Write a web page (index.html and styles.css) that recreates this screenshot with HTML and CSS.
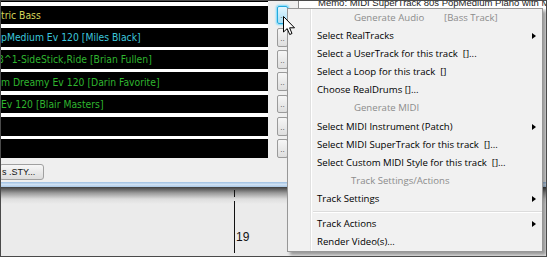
FILE: index.html
```html
<!DOCTYPE html>
<html lang="en">
<head>
    <meta charset="UTF-8">
    <title>Track Menu</title>
    <link rel="stylesheet" href="styles.css">
</head>
<body>
    <div class="frame">
        <div class="top">
            <div class="tracks">
                <div class="track stub"></div>
                <div class="track"><span class="name bass">tric Bass</span></div>
                <div class="track"><span class="name piano">pMedium Ev 120 [Miles Black]</span></div>
                <div class="track"><span class="name drums cut">3^1-SideStick,Ride [Brian Fullen]</span></div>
                <div class="track"><span class="name drums">m Dreamy Ev 120 [Darin Favorite]</span></div>
                <div class="track"><span class="name drums">Ev 120 [Blair Masters]</span></div>
                <div class="track"></div>
                <div class="track"></div>
            </div>
            <div class="pickers">
                <div class="pick stub"></div>
                <button class="pick active">..</button>
                <button class="pick">..</button>
                <button class="pick">..</button>
                <button class="pick">..</button>
                <button class="pick">..</button>
                <button class="pick">..</button>
                <button class="pick">..</button>
            </div>
            <div class="memo">
                <div class="memo-box">Memo: MIDI SuperTrack 80s PopMedium Piano with MIDI B</div>
            </div>
        </div>

        <div class="style-row">
            <button class="sty">s .STY...</button>
        </div>

        <div class="ruler">
            <div class="ruler-edge"></div>
            <div class="ruler-body">
                <div class="bar-mark"><span>19</span></div>
            </div>
        </div>

        <!-- popup menu for the track picker -->
        <div class="menu">
            <div class="item head"><span class="head-a">Generate Audio</span><span>[Bass Track]</span></div>
            <div class="item sub">Select RealTracks</div>
            <div class="item">Select a UserTrack for this track  []...</div>
            <div class="item">Select a Loop for this track  []</div>
            <div class="item">Choose RealDrums []...</div>
            <div class="item head">Generate MIDI</div>
            <div class="item sub">Select MIDI Instrument (Patch)</div>
            <div class="item">Select MIDI SuperTrack for this track  []...</div>
            <div class="item">Select Custom MIDI Style for this track  []...</div>
            <div class="item head head-wide">Track Settings/Actions</div>
            <div class="item sub">Track Settings</div>
            <div class="sep"></div>
            <div class="item sub">Track Actions</div>
            <div class="item">Render Video(s)...</div>
        </div>

        <svg class="cursor" width="13" height="20" viewBox="0 0 13 20">
            <path d="M0.5 0.5 L0.5 16 L4.2 12.6 L6.7 18.5 L9 17.5 L6.6 11.8 L11.5 11.8 Z" fill="#fff" stroke="#000" stroke-width="1" stroke-linejoin="round"/>
        </svg>
    </div>
</body>
</html>
```

FILE: styles.css
```css
* {
    box-sizing: border-box;
}
body {
    margin: 0;
    background-color: #ffffff;
}
.frame {
    position: relative;
    width: 547px;
    height: 257px;
    overflow: hidden;
    border: 1px solid #4a4a4a;
    background-color: #efefef;
    font-family: "Open Sans", sans-serif;
}
.top {
    display: flex;
}
.tracks {
    flex-shrink: 0;
    width: 267px;
    display: flex;
    flex-direction: column;
    gap: 3.5px;
    background-color: #ffffff;
}
.track {
    height: 18.8px;
    background-color: #000000;
    display: flex;
    align-items: center;
    overflow: hidden;
    white-space: nowrap;
}
.track.stub {
    height: 1px;
}
.name {
    font-family: "DejaVu Sans Condensed", "DejaVu Sans", sans-serif;
    font-size: 10.3px;
}
.name.cut {
    margin-left: -3px;
}
.bass {
    color: #d6d65a; /* yellow for the bass track */
}
.piano {
    color: #3cc6dc;
}
.drums {
    color: #2fb52f;
}
.pickers {
    flex-shrink: 0;
    width: 11px;
    margin-left: 9px;
    display: flex;
    flex-direction: column;
    gap: 3.5px;
}
.pick {
    height: 18.8px;
    padding: 0 0 3px 0;
    border: 1px solid #9a9a9a;
    border-radius: 2px;
    background: linear-gradient(#f6f6f6, #dedede);
    font-family: "Liberation Sans", sans-serif;
    font-size: 8px;
    line-height: 1;
    color: #444;
    display: flex;
    align-items: flex-end;
    justify-content: center;
}
.pick.stub {
    height: 1px;
    border: none;
    background: none;
    padding: 0;
}
.pick.active {
    border-color: #23a9dc;
    background: linear-gradient(#e2f6ff, #a9def6);
    box-shadow: 0 0 2px 1px #6fd8ff;
}
.memo {
    flex: 1;
    min-width: 0;
    height: 8px;
    padding-left: 10px;
}
.memo-box {
    height: 8px;
    overflow: hidden;
    border-left: 1px solid #8a8a8a;
    background-color: #ffffff;
    padding-left: 19px;
    font-family: "Liberation Sans", sans-serif;
    font-size: 9.5px;
    line-height: 3px;
    white-space: nowrap;
    color: #222;
}
.style-row {
    height: 24px;
    padding-top: 6px;
}
.sty {
    display: block;
    width: 45px;
    height: 16px;
    margin-left: -2px;
    padding: 0 0 0 2px;
    border: 1px solid #a0a0a0;
    border-radius: 3px;
    background: linear-gradient(#f7f7f7, #dcdcdc);
    font-family: "Liberation Sans", sans-serif;
    font-size: 9px;
    color: #111;
    text-align: left;
}
.ruler-edge {
    height: 5px;
    background: linear-gradient(#9dbfe2, #cfe1f3 50%, #a9c7e6);
}
.ruler-body {
    height: 72px;
    padding: 3px 0 0 233px;
    background: linear-gradient(#3e3e3e 0, #9a9a9a 6px, #dddddd 12px, #ebebeb 17px);
}
.bar-mark {
    width: 20px;
    height: 63px;
    background: linear-gradient(#111 0 7px, transparent 7px 11px, #111 11px) no-repeat;
    background-size: 1px 100%;
    display: flex;
    align-items: flex-end;
    padding: 0 0 9px 2px;
    font-family: "Liberation Sans", sans-serif;
    font-size: 12px;
    color: #111;
}
.menu {
    position: absolute;
    left: 286px;
    top: 7px;
    width: 256px;
    border: 1px solid #979797;
    background-color: #f1f1f1;
    background-image: linear-gradient(to right, transparent 22px, #e0e0e0 22px 23px, #ffffff 23px 24px, transparent 24px);
    box-shadow: 3px 3px 3px rgba(0, 0, 0, 0.35);
    font-size: 9.6px;
    color: #000;
}
.item {
    height: 18.1px;
    line-height: 18.1px;
    padding: 0 6px 0 29px;
    white-space: pre;
    display: flex;
    align-items: center;
}
.item.head {
    color: #8c8c8c;
    padding-left: 66px;
}
.item.head-wide {
    padding-left: 63px;
}
.head-a {
    width: 90px;
}
.item.sub::after {
    content: "";
    margin-left: auto;
    border-left: 4px solid #000;
    border-top: 3.5px solid transparent;
    border-bottom: 3.5px solid transparent;
}
.sep {
    height: 7px;
    margin-left: 25px;
    background: linear-gradient(transparent 3px, #dcdcdc 3px 4px, #ffffff 4px 5px, transparent 5px);
}
.cursor {
    position: absolute;
    left: 282px;
    top: 15px;
}
```
